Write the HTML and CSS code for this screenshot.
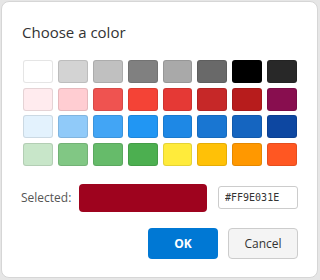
FILE: index.html
```html
<!DOCTYPE html>
<html lang="en">
<head>
    <meta charset="UTF-8">
    <title>Choose a color</title>
    <link rel="stylesheet" href="styles.css">
</head>
<body>
    <div class="dialog">
        <div class="dialog-title">Choose a color</div>
        <div class="palette">
            <div class="swatch" style="background:#ffffff"></div>
            <div class="swatch" style="background:#d3d3d3"></div>
            <div class="swatch" style="background:#c0c0c0"></div>
            <div class="swatch" style="background:#808080"></div>
            <div class="swatch" style="background:#a9a9a9"></div>
            <div class="swatch" style="background:#696969"></div>
            <div class="swatch" style="background:#000000"></div>
            <div class="swatch" style="background:#282828"></div>

            <div class="swatch" style="background:#ffebee"></div>
            <div class="swatch" style="background:#ffcdd2"></div>
            <div class="swatch" style="background:#ef5350"></div>
            <div class="swatch" style="background:#f44336"></div>
            <div class="swatch" style="background:#e53935"></div>
            <div class="swatch" style="background:#c62828"></div>
            <div class="swatch" style="background:#b71c1c"></div>
            <div class="swatch" style="background:#880e4f"></div>

            <div class="swatch" style="background:#e3f2fd"></div>
            <div class="swatch" style="background:#90caf9"></div>
            <div class="swatch" style="background:#42a5f5"></div>
            <div class="swatch" style="background:#2196f3"></div>
            <div class="swatch" style="background:#1e88e5"></div>
            <div class="swatch" style="background:#1976d2"></div>
            <div class="swatch" style="background:#1565c0"></div>
            <div class="swatch" style="background:#0d47a1"></div>

            <div class="swatch" style="background:#c8e6c9"></div>
            <div class="swatch" style="background:#81c784"></div>
            <div class="swatch" style="background:#66bb6a"></div>
            <div class="swatch" style="background:#4caf50"></div>
            <div class="swatch" style="background:#ffeb3b"></div>
            <div class="swatch" style="background:#ffc107"></div>
            <div class="swatch" style="background:#ff9800"></div>
            <div class="swatch" style="background:#ff5722"></div>
        </div>
        <div class="selected-row">
            <span class="selected-label">Selected:</span>
            <div class="selected-preview"></div>
            <input type="text" class="hex-input" value="#FF9E031E">
        </div>
        <div class="actions">
            <button class="btn btn-primary">OK</button>
            <button class="btn btn-secondary">Cancel</button>
        </div>
    </div>
</body>
</html>
```

FILE: styles.css
```css
body {
    margin: 0;
    padding: 1px;
    background: #e6e6e6;
    font-family: "Open Sans", "Noto Sans", Arial, sans-serif;
    color: #333;
}
.dialog {
    box-sizing: border-box;
    width: 317px;
    height: 277px;
    background: #fff;
    border: 1px solid #d6d6d6;
    border-radius: 8px;
    padding: 20px 19px 0 21px;
}
.dialog-title {
    font-size: 15px;
    line-height: 21px;
    color: #333;
    margin-left: -1px;
    margin-bottom: 17px;
}
.palette {
    display: grid;
    grid-template-columns: repeat(8, 1fr);
    column-gap: 5px;
    row-gap: 4.5px;
    width: 274px;
}
.swatch {
    box-sizing: border-box;
    height: 23px;
    border: 1px solid rgba(0, 0, 0, 0.1);
    border-radius: 3px;
}
.selected-row {
    display: flex;
    align-items: center;
    margin-top: 18px;
}
.selected-label {
    font-size: 12px;
    color: #555;
    width: 56px;
    margin-left: -2px;
    padding-left: 0;
}
.selected-preview {
    width: 129px;
    height: 28px;
    background: #9e031e;
    border-radius: 4px;
    margin-left: 2px;
    margin-right: 11px;
}
.hex-input {
    box-sizing: border-box;
    width: 80px;
    height: 23px;
    border: 1px solid #ccc;
    border-radius: 3px;
    padding: 0 6px;
    font-family: "DejaVu Sans Mono", monospace;
    font-size: 10px;
    color: #333;
    outline: none;
}
.actions {
    display: flex;
    justify-content: flex-end;
    gap: 10px;
    margin-top: 16px;
}
.btn {
    box-sizing: border-box;
    width: 70px;
    height: 31px;
    border-radius: 4px;
    font-family: "Open Sans", "Noto Sans", Arial, sans-serif;
    font-size: 12px;
    cursor: pointer;
}
.btn-primary {
    background: #0078d4;
    border: none;
    color: #fff;
    font-weight: bold;
}
.btn-secondary {
    background: #f4f4f4;
    border: 1px solid #ccc;
    color: #333;
}
```
